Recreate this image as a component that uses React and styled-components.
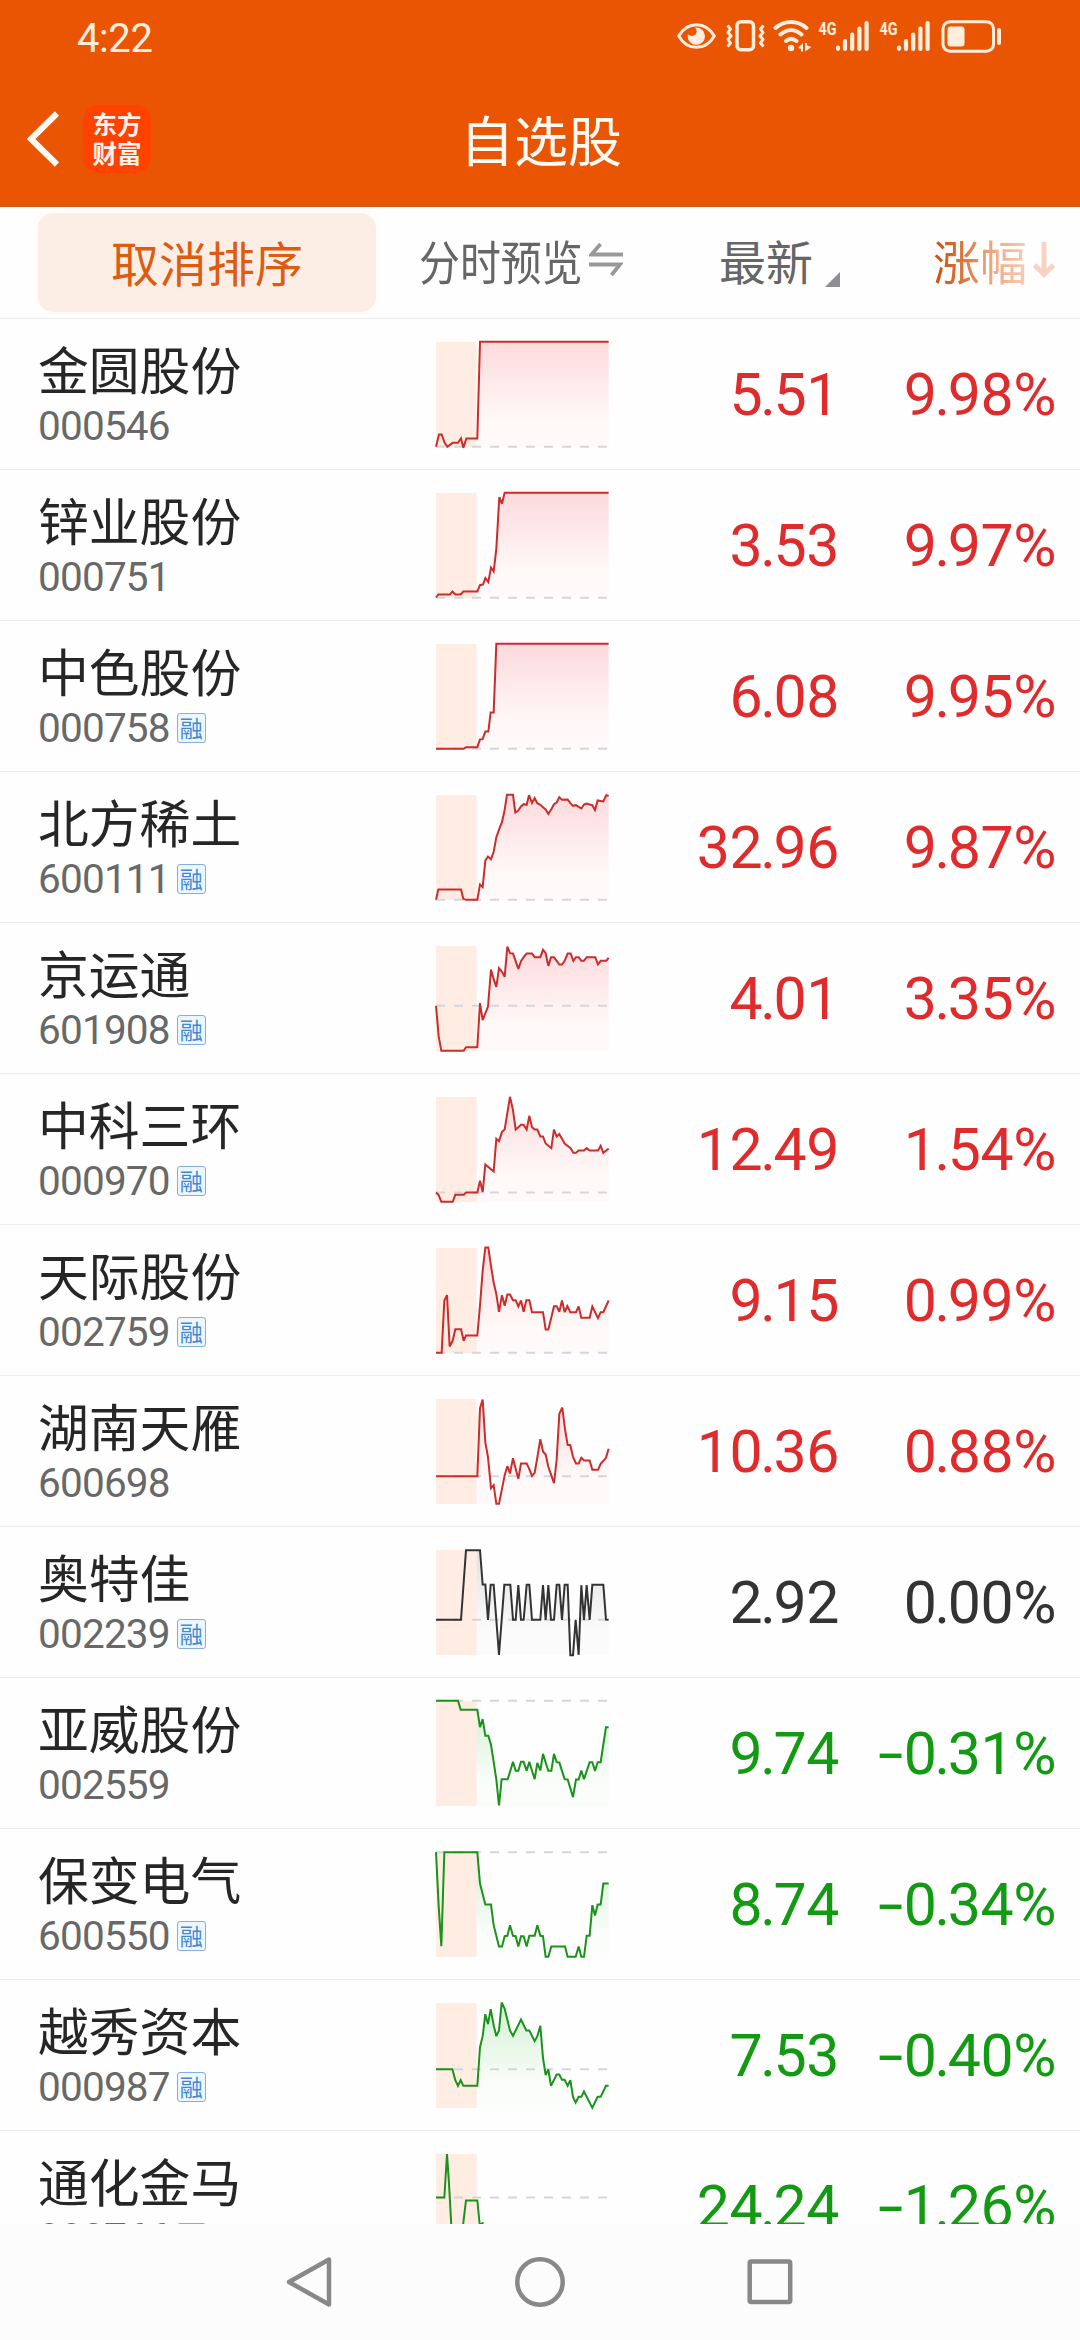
import React from 'react';
import styled, { createGlobalStyle, css } from 'styled-components';

const CJK = '"Noto Sans CJK SC", sans-serif';
const LATIN = 'Roboto, "Noto Sans CJK SC", sans-serif';

const TONES = { up: '#df2b2b', flat: '#333333', down: '#129a12' };
const LINES = { up: '#cb2c2c', flat: '#333333', down: '#1b921b' };
const FILLS = {
  up: ['#fcdadc', '#fffaf9'],
  flat: ['#e2e2e2', '#fbfbfb'],
  down: ['#d3f0d3', '#fafdfa'],
};

const GlobalStyle = createGlobalStyle`
  * { box-sizing: border-box; }
  body { margin: 0; background: #fefefe; font-family: ${LATIN}; }
  svg { flex: none; }
`;

const Screen = styled.div`
  display: flex;
  flex-direction: column;
  width: 1080px;
  height: 2340px;
  overflow: hidden;
  background: #fefefe;
`;

const Top = styled.header`
  flex: none;
  height: 207px;
  background: #ea5504;
  border-bottom: 1px solid #c75a1c;
`;

const StatusBar = styled.div`
  display: flex;
  justify-content: space-between;
  height: 72px;
  padding: 16px 78px 0 77px;
  color: #ffeedd;
`;

const Clock = styled.span`
  font-size: 40px;
  line-height: 46px;
  letter-spacing: -0.4px;
`;

const StatusIcons = styled.div`
  display: flex;
  height: 40px;
`;

const TitleBar = styled.div`
  display: grid;
  grid-template-columns: 440px 1fr 440px;
  align-items: center;
  height: 134px;
`;

const BackGroup = styled.div`
  display: flex;
  align-items: center;
  gap: 23px;
  padding-left: 26px;
`;

const Logo = styled.div`
  display: grid;
  place-content: center;
  width: 68px;
  height: 68px;
  padding-bottom: 3px;
  border-radius: 15px;
  background: #ff4200;
  color: #fff3ec;
  font: 700 24.5px/29px ${CJK};
  text-align: center;
  white-space: pre;
`;

const Title = styled.h1`
  margin: 0;
  padding-left: 2px;
  color: #fffaf3;
  font: 400 54px/70px ${CJK};
  text-align: center;
  white-space: nowrap;
`;

const columns = css`
  display: grid;
  grid-template-columns: 398px 172px 231px 217px;
  align-items: center;
  padding: 0 24px 0 38px;
`;

const HeadRow = styled.div`
  ${columns}
  flex: none;
  height: 112px;
  border-bottom: 1px solid #ebebeb;
  color: #666;
  font: 400 47px/60px ${CJK};
  white-space: nowrap;
`;

const CancelSort = styled.button`
  width: 338px;
  height: 99px;
  padding: 0 0 4px;
  border: 0;
  border-radius: 15px;
  background: #fdeee5;
  color: #dc5c12;
  font: 400 48px/60px ${CJK};
`;

const PreviewHead = styled.div`
  display: flex;
  align-items: center;
  gap: 6px;
  margin-left: -17px;
  padding-bottom: 5px;
`;

const Condensed = styled.span`
  width: 164px;
  transform: scaleX(0.87);
  transform-origin: left center;
`;

const LatestHead = styled.div`
  display: flex;
  justify-content: flex-end;
  align-items: flex-end;
  gap: 12px;
  margin-right: -1px;
  padding-bottom: 5px;
`;

const ChangeHead = styled.div`
  display: flex;
  justify-content: flex-end;
  align-items: center;
  gap: 6px;
  padding: 0 1px 5px 0;
`;

const FadeText = styled.span`
  background: linear-gradient(90deg, #cb5314 5%, #dd7b45 35%, #f0a985 65%, #f7ccb6 100%);
  background-clip: text;
  -webkit-background-clip: text;
  color: transparent;
`;

const List = styled.main`
  flex: 1;
  min-height: 0;
  overflow: hidden;
`;

const Row = styled.div`
  ${columns}
  height: 151px;
  border-bottom: 1px solid #ebebeb;
`;

const Identity = styled.div`
  display: flex;
  flex-direction: column;
  gap: 10px;
  padding-bottom: 3px;
`;

const Name = styled.div`
  color: #262626;
  font: 400 50.8px/56px ${CJK};
  white-space: nowrap;
`;

const CodeLine = styled.div`
  display: flex;
  align-items: center;
  gap: 7px;
  height: 40px;
  color: #686868;
`;

const Code = styled.span`
  font-size: 40.5px;
  line-height: 40px;
  letter-spacing: -0.8px;
`;

const Badge = styled.span`
  width: 29px;
  height: 30px;
  border: 1.5px solid #83aede;
  border-radius: 3px;
  background: #edf6fc;
  color: #4189d3;
  font: 400 23px/26px ${CJK};
  text-align: center;
`;

const Figure = styled.div`
  display: flex;
  justify-content: flex-end;
  padding-top: 2px;
  color: ${(p) => TONES[p.$tone]};
  font-size: 59px;
  line-height: 68px;
  letter-spacing: -0.4px;
  white-space: nowrap;
`;

const Dot = styled.span`
  margin: 0 -2px;
`;

const Minus = styled.span`
  width: 26px;
  transform: scaleX(1.55);
  transform-origin: left center;
`;

const ChartSvg = styled.svg`
  display: block;
  width: 172.67px;
  height: 105px;
  overflow: visible;
`;

const NavBar = styled.nav`
  display: flex;
  flex: none;
  justify-content: center;
  align-items: center;
  gap: 179px;
  height: 116px;
  background: #fcfcfc;
`;

const STOCKS = [
  { name: '金圆股份', code: '000546', price: '5.51', pct: '9.98%', tone: 'up', origin: [0, 94.5], base: 409,
    line: '0,409 9,372 17,372 26,397 34,409 50,397 66,397 75,384 82,412 91,384 124,384 132,94 518,94' },
  { name: '锌业股份', code: '000751', price: '3.53', pct: '9.97%', tone: 'up', origin: [0, 547.5], base: 862,
    line: '0,861 7,852 42,852 49,843 58,852 74,852 82,843 124,843 132,824 141,822 148,803 157,815 165,771 173,783 181,715 190,560 198,580 206,547 518,547' },
  { name: '中色股份', code: '000758', margin: true, price: '6.08', pct: '9.95%', tone: 'up', origin: [47, 70.5], base: 385,
    line: '47,385 130,385 137,380 171,380 179,357 187,356 195,333 204,333 211,276 220,276 228,70 565,70' },
  { name: '北方稀土', code: '600111', margin: true, price: '32.96', pct: '9.87%', tone: 'up', origin: [47, 523.5], base: 838,
    line: '47,838 54,807 122,807 129,835 137,838 171,838 179,792 187,800 195,720 203,708 212,716 220,694 228,650 237,625 245,604 252,574 260,523 278,523 285,576 293,571 302,558 310,551 319,553 326,524 335,547 343,533 351,548 360,553 368,560 376,567 384,580 393,566 401,551 409,546 417,530 425,538 442,537 450,548 458,556 467,554 475,559 483,564 491,552 499,549 508,552 516,554 524,569 532,540 549,543 558,524 565,527' },
  { name: '京运通', code: '601908', margin: true, price: '4.01', pct: '3.35%', tone: 'up', origin: [47, 976.5], base: 1156,
    line: '47,1156 55,1247 63,1291 130,1291 137,1280 171,1280 179,1148 187,1199 195,1179 203,1158 212,1047 220,1076 228,1099 236,1043 245,1054 253,1069 261,978 269,998 278,999 286,1022 294,1045 302,1022 310,1010 319,999 335,999 343,1010 360,1010 368,988 376,998 384,1036 392,1010 401,1010 409,1021 417,1032 425,1032 433,1021 442,999 451,999 459,1021 467,1010 475,1010 483,1021 491,1021 499,1010 525,1010 533,1032 541,1021 558,1021 565,1012' },
  { name: '中科三环', code: '000970', margin: true, price: '12.49', pct: '1.54%', tone: 'up', origin: [47, 79.5], base: 366,
    line: '47,366 55,374 63,394 97,394 105,373 130,373 137,366 171,366 179,331 187,365 195,282 212,296 220,303 228,205 236,212 245,184 253,177 261,128 269,79 278,119 286,177 294,170 302,163 310,163 319,177 327,136 335,170 343,177 351,177 360,198 368,198 376,219 393,233 401,177 409,198 417,191 425,205 433,219 451,233 459,247 467,247 475,240 491,240 499,233 508,240 533,240 541,226 549,247 565,234' },
  { name: '天际股份', code: '002759', margin: true, price: '9.15', pct: '0.99%', tone: 'up', origin: [47, 532.5], base: 847,
    line: '47,847 64,847 72,690 80,674 88,828 97,811 105,776 122,776 130,811 137,795 171,795 179,705 187,601 195,531 204,531 212,586 220,636 228,671 236,724 245,674 253,706 261,672 269,672 278,689 286,689 294,708 302,690 310,724 318,689 327,689 335,725 368,725 376,777 384,777 393,741 401,707 409,707 417,724 425,690 433,725 441,707 450,725 467,725 475,708 483,742 508,742 516,708 533,743 541,725 549,725 565,690' },
  { name: '湖南天雁', code: '600698', price: '10.36', pct: '0.88%', tone: 'up', origin: [47, 985.5], base: 1217,
    line: '47,1217 171,1217 179,1013 187,987 195,1115 203,1160 212,1253 220,1244 228,1300 236,1300 245,1255 253,1214 261,1187 269,1209 278,1163 286,1195 294,1225 302,1179 319,1179 327,1196 335,1216 343,1207 351,1161 360,1106 368,1143 376,1152 384,1189 401,1238 409,1168 417,1030 426,1011 434,1076 442,1123 450,1124 458,1159 467,1179 475,1179 483,1162 491,1170 508,1170 516,1198 533,1198 541,1180 557,1162 565,1135' },
  { name: '奥特佳', code: '002239', margin: true, price: '2.92', pct: '0.00%', tone: 'flat', origin: [47, 88.5], base: 298,
    line: '47,298 122,298 137,89 179,89 187,192 195,192 203,298 211,193 220,193 228,298 236,403 252,193 270,193 278,298 286,298 294,194 302,298 310,298 319,193 327,193 335,298 360,298 368,194 376,298 384,194 392,298 401,298 409,193 417,193 425,298 433,193 442,193 450,404 458,404 466,298 475,403 483,194 491,298 499,194 508,298 516,193 549,193 557,297 565,298' },
  { name: '亚威股份', code: '002559', price: '9.74', pct: '0.31%', negative: true, tone: 'down', origin: [47, 541.5], base: 541,
    line: '47,541 113,541 121,568 171,568 179,620 187,596 195,646 204,646 212,673 220,724 228,777 236,855 244,776 262,776 270,751 278,724 286,751 294,751 302,724 310,724 319,751 327,724 335,751 343,776 351,727 360,750 368,700 376,726 384,751 393,751 401,700 409,725 417,726 425,751 433,776 442,777 450,803 458,830 467,777 475,777 483,750 491,776 508,725 516,725 524,751 532,725 541,725 549,672 557,620 565,620' },
  { name: '保变电气', code: '600550', margin: true, price: '8.74', pct: '0.34%', negative: true, tone: 'down', origin: [47, 994.5], base: 995,
    line: '47,995 55,1156 63,1277 72,995 171,995 179,1089 195,1152 212,1152 220,1214 236,1278 245,1278 253,1247 261,1246 269,1214 278,1246 286,1247 294,1278 302,1247 310,1247 319,1278 327,1246 343,1246 351,1214 360,1246 368,1247 376,1309 384,1309 393,1278 434,1278 442,1309 466,1309 475,1278 483,1309 491,1309 499,1246 508,1246 516,1154 524,1185 532,1152 541,1152 549,1089 565,1089' },
  { name: '越秀资本', code: '000987', margin: true, price: '7.53', pct: '0.40%', negative: true, tone: 'down', origin: [47, 97.5], base: 296,
    line: '47,296 96,296 105,329 113,346 121,329 129,346 171,346 179,230 187,197 195,131 203,161 211,116 220,164 228,197 236,180 244,96 253,115 269,180 278,196 302,147 318,180 327,180 343,212 351,197 360,166 368,262 376,314 384,297 392,346 401,328 409,312 417,312 425,328 433,328 442,346 450,329 458,379 466,396 475,379 483,379 491,363 516,412 532,379 541,379 557,346 565,346' },
  { name: '通化金马', code: '000766', margin: true, price: '24.24', pct: '1.26%', negative: true, tone: 'down', origin: [47, 550.5], base: 681,
    line: '47,681 72,681 80,551 86,640 93,765 105,850 116,830 128,765 137,690 171,690 178,762 187,758 200,865 565,865' },
];

function Chart({ id, tone, origin, base, line }) {
  const [ox, oy] = origin;
  const bottom = oy + 315;
  return (
    <ChartSvg viewBox="0 0 518 315" aria-hidden="true">
      <defs>
        <linearGradient id={id} gradientUnits="userSpaceOnUse" x1="0" y1={oy} x2="0" y2={oy + 245}>
          <stop offset="0" stopColor={FILLS[tone][0]} />
          <stop offset="1" stopColor={FILLS[tone][1]} />
        </linearGradient>
      </defs>
      <g transform={`translate(${-ox} ${-oy})`}>
        <polygon points={`${ox},${bottom} ${line} ${ox + 518},${bottom}`} fill={`url(#${id})`} />
        <rect x={ox} y={oy} width="122" height="315" fill="#ffede4" />
        <path d={`M${ox} ${base}H${ox + 518}`} stroke="#d4d6dc" strokeWidth="6" strokeDasharray="27 27" />
        <polyline points={line} fill="none" stroke={LINES[tone]} strokeWidth="6" strokeMiterlimit="3" />
      </g>
    </ChartSvg>
  );
}

function Amount({ value, tone, negative }) {
  const [whole, rest] = value.split('.');
  return (
    <Figure $tone={tone}>
      {negative && <Minus>-</Minus>}
      {whole}
      <Dot>.</Dot>
      {rest}
    </Figure>
  );
}

const Signal = ({ width }) => (
  <svg width={width} height="40" viewBox={`0 0 ${width} 40`} fill="none" stroke="currentColor" strokeLinecap="round">
    <text x="0.5" y="18.500" fontSize="18.500" fontWeight="700" fontFamily="Roboto, sans-serif" fill="currentColor" stroke="none" textLength="18" lengthAdjust="spacingAndGlyphs">4G</text>
    <path strokeWidth="4.200" d="M20 31.600v1.200M27 25v8M34.200 18.600V33M41.400 12.600V33M48.600 7V33" />
  </svg>
);

function StatusGlyphs() {
  return (
    <StatusIcons>
      <svg width="49" height="40" viewBox="0 0 49 40" fill="none" stroke="currentColor">
        <path strokeWidth="3" d="M1.700 20C6 12.500 12 8.700 19.500 8.700S33 12.500 37.300 20C33 27.500 27 31.300 19.500 31.300S6 27.500 1.700 20Z" />
        <path fill="currentColor" stroke="none" d="M18 11.500A8.700 8.700 0 1 1 10.800 18.200A5.500 5.500 0 0 0 18.500 18.500A5.500 5.500 0 0 0 18 11.500Z" />
      </svg>
      <svg width="47" height="40" viewBox="0 0 47 40" fill="none" stroke="currentColor">
        <rect x="11" y="5.800" width="16.500" height="28" rx="4" strokeWidth="3.500" />
        <path strokeWidth="3" strokeLinejoin="round" d="M1.500 9.500l3 3.500-2.500 3.500 3 3.500-3 3.500 2.500 3.500-3 3.500M37.500 9.500l-3 3.500 2.500 3.500-3 3.500 3 3.500-2.500 3.500 3 3.500" />
      </svg>
      <svg width="45" height="40" viewBox="0 0 45 40" fill="none" stroke="currentColor" strokeWidth="4" strokeLinecap="round">
        <path d="M2.500 12C11.500 4 24.500 4 33.500 12M7.500 18.500C14 12.700 22 12.700 28.500 18.500M13 25C16.300 22.200 20 22.200 23.500 25" />
        <circle cx="18" cy="32" r="3.200" fill="currentColor" stroke="none" />
        <path fill="currentColor" stroke="none" d="M25 32l5-5v8.500h-2V33zM32 27h2v2.500L38.500 31 32 35.500z" />
      </svg>
      <Signal width={61} />
      <Signal width={62} />
      <svg width="61" height="40" viewBox="0 0 61 40" fill="none" stroke="currentColor">
        <rect x="2" y="5.700" width="50.500" height="29.500" rx="7" strokeWidth="3" />
        <rect x="6.500" y="10.500" width="17" height="20" rx="3" fill="currentColor" stroke="none" />
        <path strokeWidth="4" strokeLinecap="round" d="M58 14v13" />
      </svg>
    </StatusIcons>
  );
}

export default function App() {
  return (
    <Screen>
      <GlobalStyle />
      <Top>
        <StatusBar>
          <Clock>4:22</Clock>
          <StatusGlyphs />
        </StatusBar>
        <TitleBar>
          <BackGroup>
            <svg width="34" height="56" viewBox="0 0 34 56" fill="none" stroke="#fffaf3" strokeWidth="6">
              <path d="M31 2.500L5 28L31 53.500" />
            </svg>
            <Logo>{'东方\n财富'}</Logo>
          </BackGroup>
          <Title>自选股</Title>
        </TitleBar>
      </Top>
      <HeadRow>
        <CancelSort>取消排序</CancelSort>
        <PreviewHead>
          <Condensed>分时预览</Condensed>
          <svg width="34" height="34" viewBox="0 0 34 34" fill="none" stroke="#999" strokeWidth="3.800">
            <path d="M11.500 1L2.500 11.500H34M0 21.500H31L22.500 32" />
          </svg>
        </PreviewHead>
        <LatestHead>
          最新
          <svg width="15" height="18" viewBox="0 0 15 18">
            <path d="M15 0V15H0Z" fill="#8e8e93" />
          </svg>
        </LatestHead>
        <ChangeHead>
          <FadeText>涨幅</FadeText>
          <svg width="22" height="36" viewBox="0 0 22 36" fill="none" stroke="#f9d3c1" strokeWidth="5">
            <path d="M11 0V33M1.500 23L11 32.500L20.500 23" />
          </svg>
        </ChangeHead>
      </HeadRow>
      <List>
        {STOCKS.map((s) => (
          <Row key={s.code}>
            <Identity>
              <Name>{s.name}</Name>
              <CodeLine>
                <Code>{s.code}</Code>
                {s.margin && <Badge>融</Badge>}
              </CodeLine>
            </Identity>
            <Chart id={`fill-${s.code}`} tone={s.tone} origin={s.origin} base={s.base} line={s.line} />
            <Amount value={s.price} tone={s.tone} />
            <Amount value={s.pct} tone={s.tone} negative={s.negative} />
          </Row>
        ))}
      </List>
      <NavBar>
        <svg width="50" height="54" viewBox="0 0 50 54" fill="none" stroke="#888" strokeWidth="4.500" strokeLinejoin="round">
          <path d="M45 4.500V49.500L5 27Z" />
        </svg>
        <svg width="54" height="54" viewBox="0 0 54 54" fill="none" stroke="#888" strokeWidth="4.500">
          <circle cx="27" cy="27" r="22.700" />
        </svg>
        <svg width="50" height="54" viewBox="0 0 50 54" fill="none" stroke="#888" strokeWidth="4.500">
          <rect x="3.700" y="6.500" width="40.500" height="40.500" rx="1.500" />
        </svg>
      </NavBar>
    </Screen>
  );
}
